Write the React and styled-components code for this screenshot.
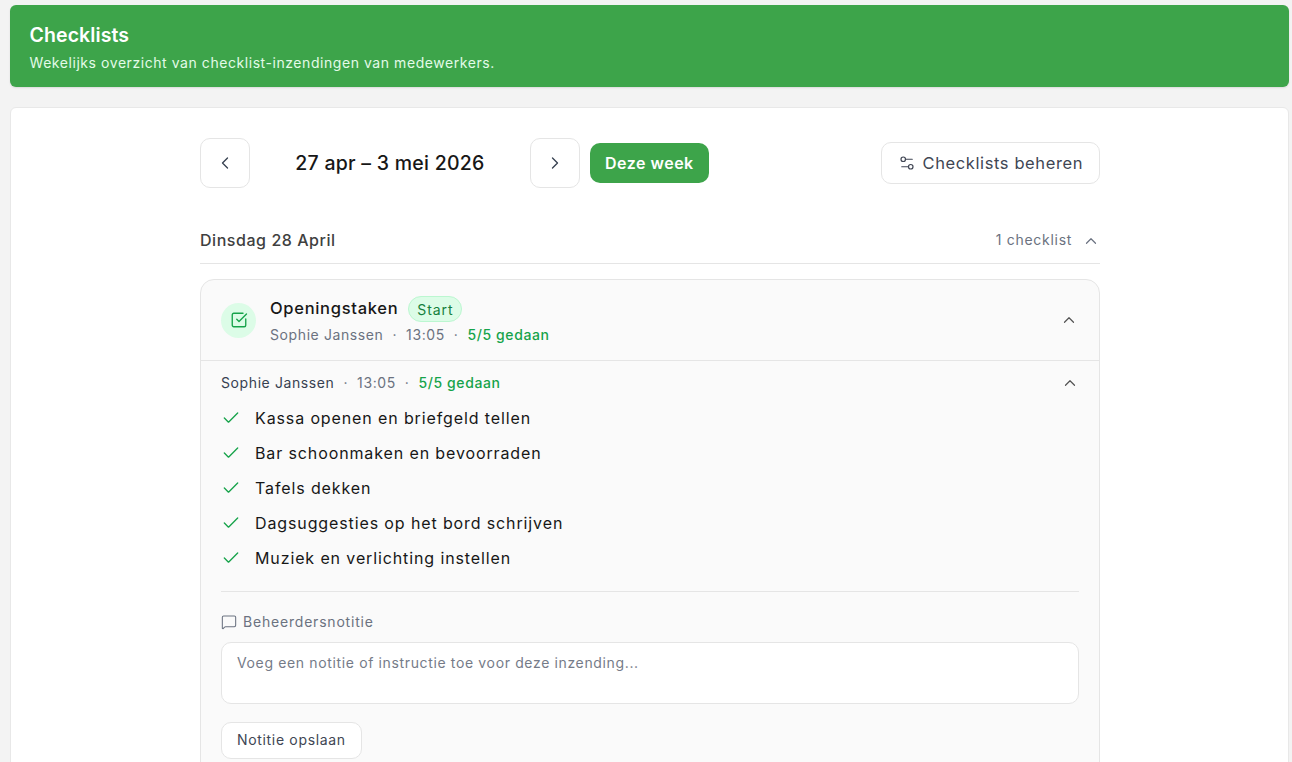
import React from 'react';
import styled, { createGlobalStyle } from 'styled-components';
import { Check, ChevronLeft, ChevronRight, ChevronUp, MessageSquare, Settings2, SquareCheckBig } from 'lucide-react';

const items = [
  'Kassa openen en briefgeld tellen',
  'Bar schoonmaken en bevoorraden',
  'Tafels dekken',
  'Dagsuggesties op het bord schrijven',
  'Muziek en verlichting instellen',
];

const GlobalStyle = createGlobalStyle`
  html, body {
    margin: 0;
    height: 100%;
    overflow: hidden;
    background: #f3f3f3;
    font-family: Inter, "Liberation Sans", sans-serif;
    color: #171717;
  }
  * { box-sizing: border-box; }
`;

const Page = styled.div`
  height: 762px;
  overflow: hidden;
  padding: 5px 3px 0 10px;
  display: flex;
  flex-direction: column;
  gap: 20px;
`;

const Banner = styled.header`
  height: 82px;
  flex: none;
  background: #3da44a;
  border-radius: 6px;
  padding: 18px 20px 0 19.5px;
  color: #fff;
  box-shadow: 0 1px 2px rgba(0, 0, 0, 0.1);
`;

const BannerTitle = styled.h1`
  margin: 0;
  font-size: 19.5px;
  line-height: 24px;
  font-weight: 600;
  letter-spacing: 0.1px;
`;

const BannerText = styled.p`
  margin: 7px 0 0;
  font-size: 14px;
  line-height: 18px;
  letter-spacing: 0.56px;
  color: #e3fbe8;
`;

const Panel = styled.main`
  flex: 1;
  background: #fff;
  border: 1px solid #e8e8e8;
  border-radius: 6px 6px 0 0;
  padding: 30px 0 0;
`;

const Inner = styled.div`
  width: 900px;
  margin-left: 189px;
`;

const Toolbar = styled.div`
  display: flex;
  align-items: center;
  height: 50px;
`;

const IconButton = styled.button`
  width: 50px;
  height: 50px;
  border: 1px solid #e5e5e5;
  border-radius: 10px;
  background: #fff;
  color: #374151;
  display: flex;
  align-items: center;
  justify-content: center;
  padding: 0;
`;

const WeekLabel = styled.div`
  width: 280px;
  text-align: center;
  font-size: 19.5px;
  font-weight: 500;
  letter-spacing: 0.26px;
  color: #171717;
`;

const TodayButton = styled.button`
  height: 40px;
  margin-left: 10px;
  padding: 0 15px;
  border: none;
  border-radius: 10px;
  background: #3da44a;
  color: #fff;
  font: 600 16px Inter, sans-serif;
  letter-spacing: 0.5px;
`;

const ManageButton = styled.button`
  margin-left: auto;
  height: 42px;
  padding: 0 16px;
  display: flex;
  align-items: center;
  gap: 7px;
  border: 1px solid #e5e5e5;
  border-radius: 10px;
  background: #fff;
  color: #404654;
  font: 400 16.5px Inter, sans-serif;
  letter-spacing: 0.6px;
`;

const DayHeader = styled.div`
  margin-top: 26px;
  height: 50px;
  padding-top: 2px;
  border-bottom: 1px solid #e5e5e5;
  display: flex;
  align-items: center;
  justify-content: space-between;
`;

const DayTitle = styled.h2`
  margin: 0;
  font-size: 16px;
  font-weight: 500;
  letter-spacing: 0.55px;
  color: #404040;
`;

const DayMeta = styled.div`
  display: flex;
  align-items: center;
  gap: 10px;
  font-size: 14px;
  letter-spacing: 0.7px;
  color: #6b7280;

  svg {
    margin-top: 2px;
  }
`;

const Card = styled.section`
  margin-top: 15px;
  height: 600px;
  background: #fafafa;
  border: 1px solid #e5e5e5;
  border-radius: 14px;
`;

const CardHeader = styled.div`
  height: 81px;
  padding: 0 21px 0 20px;
  display: flex;
  align-items: center;
  border-bottom: 1px solid #e5e5e5;
`;

const IconCircle = styled.div`
  width: 35px;
  height: 35px;
  border-radius: 50%;
  background: #dcfce7;
  color: #16a34a;
  display: flex;
  align-items: center;
  justify-content: center;
  flex: none;
`;

const HeaderBody = styled.div`
  margin-left: 14px;
  flex: 1;
`;

const TitleRow = styled.div`
  display: flex;
  align-items: center;
  gap: 10px;
`;

const CardTitle = styled.h3`
  margin: 0 0 2px;
  font-size: 16.5px;
  font-weight: 500;
  letter-spacing: 0.7px;
  color: #171717;
`;

const Badge = styled.span`
  height: 26px;
  padding: 0 8px;
  display: flex;
  align-items: center;
  border-radius: 13px;
  border: 1px solid #bbf7d0;
  background: #dcfce7;
  color: #15803d;
  font-size: 14px;
  letter-spacing: 0.9px;
`;

const MetaRow = styled.div`
  margin-top: ${p => (p.$compact ? 0 : 4)}px;
  display: flex;
  align-items: center;
  gap: 9px;
  font-size: 14px;
  line-height: 18px;
  letter-spacing: 0.6px;
  color: #6b7280;
`;

const Author = styled.span`
  color: ${p => (p.$dark ? '#374151' : '#6b7280')};
`;

const Done = styled.span`
  color: #16a34a;
  font-weight: 500;
`;

const CollapseIcon = styled.span`
  display: flex;
  color: #525252;
`;

const Body = styled.div`
  padding: 13px 20px 0;
`;

const SubHeader = styled.div`
  display: flex;
  align-items: center;
  justify-content: space-between;
  height: 18px;
`;

const List = styled.ul`
  list-style: none;
  margin: 8px 0 0;
  padding: 0 0 16px;
  border-bottom: 1px solid #e5e5e5;
`;

const Item = styled.li`
  height: 35px;
  display: flex;
  align-items: center;
  gap: 14px;
  font-size: 16px;
  letter-spacing: 0.88px;
  color: #171717;
`;

const NoteLabel = styled.div`
  margin-top: 21px;
  display: flex;
  align-items: center;
  gap: 6px;
  font-size: 14px;
  line-height: 18px;
  letter-spacing: 0.8px;
  color: #6b7280;
`;

const NoteInput = styled.div`
  margin-top: 11px;
  height: 62px;
  padding: 10px 15px;
  background: #fff;
  border: 1px solid #e5e5e5;
  border-radius: 10px;
  font-size: 14px;
  line-height: 20px;
  letter-spacing: 0.64px;
  color: #757b88;
`;

const SaveButton = styled.button`
  margin-top: 18px;
  height: 37px;
  padding: 0 15px 2px;
  background: #fff;
  border: 1px solid #e5e5e5;
  border-radius: 10px;
  color: #404654;
  font: 400 14px Inter, sans-serif;
  letter-spacing: 0.67px;
`;

export default function App() {
  return (
    <>
      <GlobalStyle />
      <Page>
        <Banner>
          <BannerTitle>Checklists</BannerTitle>
          <BannerText>Wekelijks overzicht van checklist-inzendingen van medewerkers.</BannerText>
        </Banner>
        <Panel>
          <Inner>
            <Toolbar>
              <IconButton><ChevronLeft size={20} strokeWidth={1.6} /></IconButton>
              <WeekLabel>27 apr – 3 mei 2026</WeekLabel>
              <IconButton><ChevronRight size={20} strokeWidth={1.6} /></IconButton>
              <TodayButton>Deze week</TodayButton>
              <ManageButton><Settings2 size={18} strokeWidth={1.6} />Checklists beheren</ManageButton>
            </Toolbar>
            <DayHeader>
              <DayTitle>Dinsdag 28 April</DayTitle>
              <DayMeta>1 checklist <ChevronUp size={18} strokeWidth={1.6} /></DayMeta>
            </DayHeader>
            <Card>
              <CardHeader>
                <IconCircle><SquareCheckBig size={18} strokeWidth={1.8} /></IconCircle>
                <HeaderBody>
                  <TitleRow>
                    <CardTitle>Openingstaken</CardTitle>
                    <Badge>Start</Badge>
                  </TitleRow>
                  <MetaRow>
                    <Author>Sophie Janssen</Author>·<span>13:05</span>·<Done>5/5 gedaan</Done>
                  </MetaRow>
                </HeaderBody>
                <CollapseIcon><ChevronUp size={18} strokeWidth={1.6} /></CollapseIcon>
              </CardHeader>
              <Body>
                <SubHeader>
                  <MetaRow $compact>
                    <Author $dark>Sophie Janssen</Author>·<span>13:05</span>·<Done>5/5 gedaan</Done>
                  </MetaRow>
                  <CollapseIcon><ChevronUp size={18} strokeWidth={1.6} /></CollapseIcon>
                </SubHeader>
                <List>
                  {items.map(item => (
                    <Item key={item}><Check size={20} strokeWidth={1.6} color="#16a34a" />{item}</Item>
                  ))}
                </List>
                <NoteLabel><MessageSquare size={16} strokeWidth={1.6} />Beheerdersnotitie</NoteLabel>
                <NoteInput>Voeg een notitie of instructie toe voor deze inzending...</NoteInput>
                <SaveButton>Notitie opslaan</SaveButton>
              </Body>
            </Card>
          </Inner>
        </Panel>
      </Page>
    </>
  );
}
